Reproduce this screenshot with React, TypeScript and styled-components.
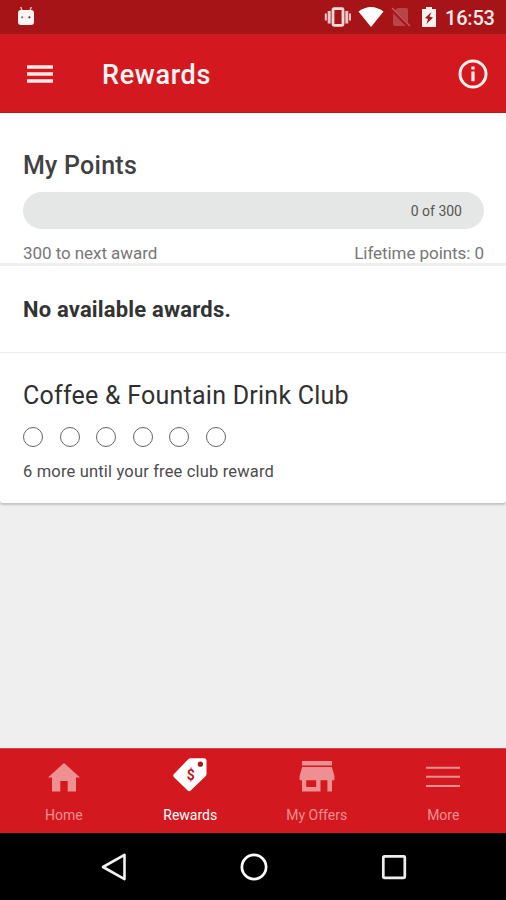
import React from 'react';
import styled, { createGlobalStyle } from 'styled-components';

const GlobalStyle = createGlobalStyle`
  * { box-sizing: border-box; }
  body { margin: 0; background: #efefef; font-family: Roboto, sans-serif; }
  svg { display: block; flex: none; }
`;

const Screen = styled.div`
  width: 506px;
  height: 900px;
  display: flex;
  flex-direction: column;
  background: #efefef;
  overflow: hidden;
`;

const StatusBar = styled.header`
  height: 34px;
  flex: none;
  display: flex;
  align-items: center;
  justify-content: space-between;
  padding: 0 11px 0 17px;
  background: #a61418;
`;

const StatusIcons = styled.div`
  display: flex;
  align-items: center;
`;

const Clock = styled.span`
  width: 50px;
  margin-left: 8px;
  color: #fbe9ea;
  font-size: 20px;
  font-weight: 500;
  line-height: 36px;
  letter-spacing: -0.2px;
  padding-top: 1px;
  white-space: nowrap;
`;

const AppBar = styled.div`
  height: 79px;
  flex: none;
  display: flex;
  align-items: center;
  padding: 1px 17px 0 26px;
  background: #d3191f;
  border-bottom: 1px solid #b3191c;
`;

const Title = styled.h1`
  flex: 1;
  margin: 3px 0 0 48px;
  color: #fff5f5;
  font-size: 27px;
  font-weight: 500;
  line-height: 32px;
  letter-spacing: 0.65px;
`;

const PointsSection = styled.section`
  height: 150px;
  flex: none;
  padding: 37px 22px 0 23px;
  background: #fff;
`;

const Heading = styled.h2`
  margin: 0;
  color: #414141;
  font-size: 25px;
  font-weight: 500;
  line-height: 32px;
  letter-spacing: 0.25px;
`;

const Progress = styled.div`
  height: 37px;
  margin-top: 10px;
  padding-right: 22px;
  border-radius: 19px;
  background: #e5e7e6;
  color: #555;
  font-size: 14px;
  line-height: 39px;
  text-align: right;
`;

const PointsCaption = styled.div`
  display: flex;
  justify-content: space-between;
  margin-top: 13px;
  color: #777;
  font-size: 17px;
  line-height: 22px;
  letter-spacing: -0.06px;
`;

const AwardsSection = styled.section`
  height: 90px;
  flex: none;
  padding: 30px 23px 0;
  background: #fff;
  border-top: 3px solid #efefef;
  border-bottom: 1px solid #ececec;
`;

const AwardsMessage = styled.p`
  margin: 0;
  color: #333;
  font-size: 22px;
  font-weight: 700;
  line-height: 28px;
  letter-spacing: 0.18px;
`;

const ClubCard = styled.section`
  height: 150px;
  flex: none;
  padding: 27px 23px 0;
  background: #fff;
  border-radius: 0 0 3px 3px;
  box-shadow: 0 2px 2px #c4c4c4;
`;

const ClubName = styled.h3`
  margin: 0;
  color: #303030;
  font-size: 25px;
  font-weight: 400;
  line-height: 32px;
  letter-spacing: 0.24px;
`;

const Stamps = styled.div`
  display: flex;
  gap: 16.6px;
  margin-top: 15px;
`;

const Stamp = styled.span`
  width: 20px;
  height: 20px;
  border: 1.4px solid #666;
  border-radius: 50%;
`;

const ClubCaption = styled.p`
  margin: 14px 0 0;
  color: #4c4c4c;
  font-size: 16.5px;
  line-height: 22px;
  letter-spacing: 0.17px;
`;

const Spacer = styled.div`
  flex: 1;
`;

const TabBar = styled.nav`
  height: 85px;
  flex: none;
  display: grid;
  grid-template-columns: repeat(4, 1fr);
  background: #d3191f;
  border-top: 1px solid #d3484b;
`;

const Tab = styled.div<{ $active?: boolean }>`
  display: flex;
  flex-direction: column;
  align-items: center;
  padding: 7px 0 0 1px;
  color: ${(p) => (p.$active ? '#ffffff' : '#ee8f92')};
`;

const TabLabel = styled.span`
  margin-top: 7px;
  font-size: 14px;
  line-height: 20px;
`;

const SystemBar = styled.footer`
  height: 67px;
  flex: none;
  display: flex;
  justify-content: center;
  align-items: center;
  gap: 112px;
  padding-left: 1px;
  background: #000;
`;

const AndroidHead = () => (
  <svg width="18" height="20" viewBox="0 0 18 20">
    <path d="M3.8 0l1.3 4M14.2 0l-1.3 4" stroke="#f4c9cc" strokeWidth="1.4" />
    <path d="M1 6q0-3 3-3h10q3 0 3 3v9q0 3-3 3H4q-3 0-3-3z" fill="#fff5f5" />
    <circle cx="5.2" cy="10.3" r="1.1" fill="#8b6b70" />
    <circle cx="12.4" cy="10.3" r="1.1" fill="#701b24" />
  </svg>
);

const Vibrate = () => (
  <svg width="28" height="22" viewBox="0 0 28 22" fill="none" stroke="#f2c6c8">
    <rect x="9" y="2.7" width="10" height="16.6" rx="1" stroke="#f9dddd" strokeWidth="2.8" />
    <path d="M5.2 5v12.5M22.8 5v12.5" strokeWidth="3" />
    <path d="M1.8 7.5v7M26 7.5v7" strokeWidth="2" />
  </svg>
);

const Wifi = () => (
  <svg width="26" height="22" viewBox="0 0 26 22">
    <path d="M.5 5.5Q13-3.5 25.5 5.5L13 21z" fill="#fff" />
  </svg>
);

const NoSim = () => (
  <svg width="20" height="22" viewBox="0 0 20 22">
    <path d="M7 2h8q2 0 2 2v12.5L4 4zM2 7l13 13H4q-2 0-2-2z" fill="#b8454a" />
    <path d="M1 2l18 18" stroke="#c75c60" strokeWidth="1.5" />
  </svg>
);

const Battery = () => (
  <svg width="16" height="22" viewBox="0 0 16 22">
    <path d="M5 1h6v2h4v18H1V3h4z" fill="#fff0f0" />
    <path d="M10.5 6L4 12l3 1-1.5 5L12 11.5l-3.5-1z" fill="#9e171b" />
  </svg>
);

const MenuIcon = () => (
  <svg width="28" height="22" viewBox="0 0 28 22">
    <path d="M1 4h26M1 11.1h26M1 18h26" stroke="#ffe8e8" strokeWidth="3.5" />
  </svg>
);

const InfoIcon = () => (
  <svg width="32" height="32" viewBox="0 0 32 32">
    <circle cx="16" cy="16" r="13" fill="none" stroke="#fff0f0" strokeWidth="3" />
    <path d="M16 8.4v3M16 13.4v9.8" stroke="#fff0f0" strokeWidth="3.2" />
  </svg>
);

const HomeIcon = () => (
  <svg width="34" height="42" viewBox="0 0 34 42">
    <path d="M17 7L33 21.4h-4V35.5h-8.3V25h-7.4v10.5H5V21.4H1z" fill="currentColor" />
  </svg>
);

const TagIcon = () => (
  <svg width="36" height="42" viewBox="0 0 36 42">
    <path
      d="M18.5 2.3H32q2.5 0 2.5 2.5V18q0 1.3-1 2.3L19 34.3q-1.8 1.8-3.6 0L2 21.3q-1.5-1.7 0-3.4L16.2 3.3q1-1 2.3-1z"
      fill="currentColor"
    />
    <circle cx="28.4" cy="8.2" r="2.6" fill="#a8151b" />
    <text x="18.8" y="23.7" textAnchor="middle" fontFamily="Roboto" fontSize="14" fontWeight="700" fill="#c4161c">
      $
    </text>
  </svg>
);

const StoreIcon = () => (
  <svg width="36" height="42" viewBox="0 0 36 42" fill="currentColor">
    <path d="M3 5h30v4.5H3z" />
    <path d="M3.2 11h29.6l2.6 8.8v4.4H33v11.3h-4.6V24.2h-6.9v11.3H3V24.2H.6v-4.4zM7.2 24.2V31h10v-6.8z" fillRule="evenodd" />
  </svg>
);

const MoreIcon = () => (
  <svg width="36" height="42" viewBox="0 0 36 42">
    <path d="M1 11.8h34M1 20.8h34M1 30h34" stroke="currentColor" strokeWidth="2" />
  </svg>
);

const BackIcon = () => (
  <svg width="28" height="28" viewBox="0 0 28 28">
    <path d="M24.5 1.9v24.2L3 14z" fill="none" stroke="#f2f2f2" strokeWidth="2.6" strokeLinejoin="round" />
  </svg>
);

const CircleIcon = () => (
  <svg width="28" height="28" viewBox="0 0 28 28">
    <circle cx="14" cy="14" r="12.1" fill="none" stroke="#fff" strokeWidth="2.7" />
  </svg>
);

const SquareIcon = () => (
  <svg width="28" height="28" viewBox="0 0 28 28">
    <rect x="3.3" y="3.3" width="21.5" height="21.5" rx="1" fill="none" stroke="#eee" strokeWidth="2.7" />
  </svg>
);

const StatusGap = styled.span<{ $width: number }>`
  width: ${(p) => p.$width}px;
`;

export default function App() {
  return (
    <Screen>
      <GlobalStyle />
      <StatusBar>
        <AndroidHead />
        <StatusIcons>
          <Vibrate />
          <StatusGap $width={6} />
          <Wifi />
          <StatusGap $width={7} />
          <NoSim />
          <StatusGap $width={10} />
          <Battery />
          <Clock>16:53</Clock>
        </StatusIcons>
      </StatusBar>
      <AppBar>
        <MenuIcon />
        <Title>Rewards</Title>
        <InfoIcon />
      </AppBar>
      <PointsSection>
        <Heading>My Points</Heading>
        <Progress>0 of 300</Progress>
        <PointsCaption>
          <span>300 to next award</span>
          <span>Lifetime points: 0</span>
        </PointsCaption>
      </PointsSection>
      <AwardsSection>
        <AwardsMessage>No available awards.</AwardsMessage>
      </AwardsSection>
      <ClubCard>
        <ClubName>Coffee &amp; Fountain Drink Club</ClubName>
        <Stamps>
          {[0, 1, 2, 3, 4, 5].map((n) => (
            <Stamp key={n} />
          ))}
        </Stamps>
        <ClubCaption>6 more until your free club reward</ClubCaption>
      </ClubCard>
      <Spacer />
      <TabBar>
        <Tab>
          <HomeIcon />
          <TabLabel>Home</TabLabel>
        </Tab>
        <Tab $active>
          <TagIcon />
          <TabLabel>Rewards</TabLabel>
        </Tab>
        <Tab>
          <StoreIcon />
          <TabLabel>My Offers</TabLabel>
        </Tab>
        <Tab>
          <MoreIcon />
          <TabLabel>More</TabLabel>
        </Tab>
      </TabBar>
      <SystemBar>
        <BackIcon />
        <CircleIcon />
        <SquareIcon />
      </SystemBar>
    </Screen>
  );
}
